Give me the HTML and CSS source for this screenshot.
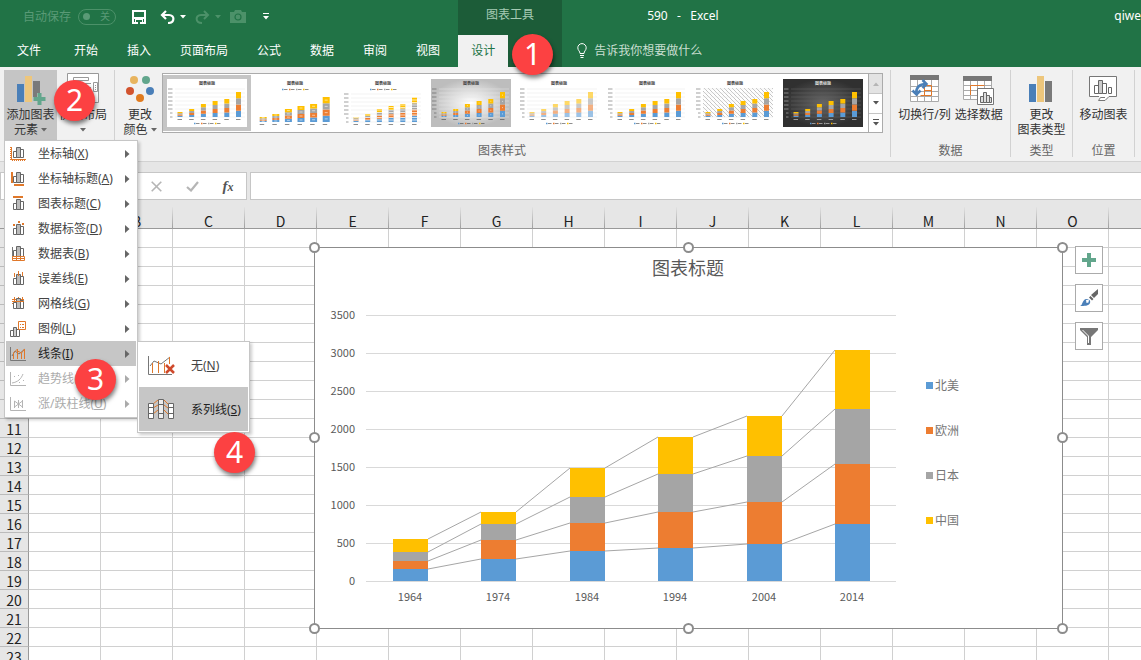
FILE: index.html
```html
<!DOCTYPE html>
<html lang="zh-CN">
<head>
<meta charset="utf-8">
<title>590 - Excel</title>
<link rel="stylesheet" href="styles.css">
</head>
<body>
<svg class="defs" aria-hidden="true">
  <symbol id="bars" viewBox="0 0 16 16"><g fill="#fff" stroke="#666"><path d="M3.500 6.500h3v6h-3zM10.500 4.500h3v8h-3z"/><path fill="#bbb" d="M6.500 2.500h4v10h-4z"/></g></symbol>
  <symbol id="caret" viewBox="0 0 6 4"><path fill="currentColor" d="M0 0h6L3 3.500z"/></symbol>
</svg>

<header class="top">
  <div class="top-main">
    <div class="title-row quick">
      <label class="autosave"><span>自动保存</span><span class="switch"><input type="checkbox" disabled>关</span></label>
      <button class="q q-save" aria-label="保存"><svg width="14" height="14" viewBox="0 0 14 14"><path fill="none" stroke="#fff" stroke-width="2" d="M1 1h12v12H1z"/><path fill="#fff" d="M1 7h12v2H1zM3 9h8v5H3z"/><path fill="#217346" d="M4 10h6v2H4zM6 12h2v2H6z"/></svg></button>
      <button class="q q-undo" aria-label="撤消"><svg width="15" height="14" viewBox="0 0 15 14"><path fill="none" stroke="#fff" stroke-width="2.200" d="M6 1L2 5l4 4M2 5h7c6 0 6 8-1 8"/></svg><svg width="6" height="4"><use href="#caret"/></svg></button>
      <button class="q q-redo" aria-label="恢复" disabled><svg width="15" height="14" viewBox="0 0 15 14"><path fill="none" stroke="currentColor" stroke-width="2" d="M9 1l4 4-4 4M13 5H6c-6 0-6 8 1 8"/></svg><svg width="6" height="4"><use href="#caret"/></svg></button>
      <button class="q q-cam" aria-label="照相机" disabled><svg width="16" height="13" viewBox="0 0 16 13"><path fill="currentColor" d="M0 2h4l1-2h6l1 2h4v11H0z"/><circle cx="8" cy="7" r="3" fill="none" stroke="#217346" stroke-width="1.200"/></svg></button>
      <button class="q q-more" aria-label="自定义快速访问工具栏"><svg width="6" height="7" viewBox="0 0 6 7"><path fill="#fff" d="M0 0h6v1H0zM0 3h6L3 6.500z"/></svg></button>
    </div>
    <nav class="tabs">
      <button class="tab tab-file">文件</button><button class="tab">开始</button><button class="tab">插入</button><button class="tab">页面布局</button><button class="tab">公式</button><button class="tab">数据</button><button class="tab">审阅</button><button class="tab">视图</button>
    </nav>
  </div>
  <div class="top-context">
    <div class="title-row context-name">图表工具</div>
    <nav class="tabs"><button class="tab tab-active">设计</button></nav>
    <span class="step step-1">1</span>
  </div>
  <div class="top-rest">
    <div class="title-row"><span class="doc">590&nbsp;&nbsp; -&nbsp;&nbsp; Excel</span><span class="user">qiwe</span></div>
    <button class="tell"><svg width="10" height="15" viewBox="0 0 10 15"><path fill="none" stroke="#fff" d="M3 10.500C3 8 .8 7.500.8 4.800a4.200 4.200 0 018.400 0C9.200 7.500 7 8 7 10.500zM3 12.500h4M3.500 14.500h3"/></svg>告诉我你想要做什么</button>
  </div>
</header>

<section class="ribbon">
  <div class="group group-layout">
    <div class="tools">
      <div class="drop">
        <button class="big big-open">
          <svg width="30" height="30" viewBox="0 0 30 30"><path fill="#4a7fb8" d="M1 9h7v18H1z"/><path fill="#edc67c" d="M9 1h7v26H9z"/><path fill="#7a7a7a" d="M17 6h7v12h-3v4h-4z"/><path fill="#62a68c" d="M21.500 18h4v4h4v4h-4v4h-4v-4h-4v-4h4z"/></svg>
          <span>添加图表<br>元素 <svg class="arrow"><use href="#caret"/></svg></span>
        </button>
        <ul class="menu" id="menu"></ul>
      </div>
      <button class="big big-quick">
        <svg width="32" height="30" viewBox="0 0 32 30"><g fill="#fff" stroke="#999"><path d="M.5.500h31v29H.5z"/><path d="M6.500 4.500h15v3h-15zM26.500 9.500h4v9h-4z"/></g><path stroke="#999" fill="none" d="M4 10.500h20M4 14.500h20M4 18.500h20M28 12.500h1M28 14.500h1M28 16.500h1"/></svg>
        <span>快速布局<br><svg class="arrow"><use href="#caret"/></svg></span>
      </button>
      <span class="step step-2">2</span>
    </div>
  </div>
  <div class="group group-style">
    <div class="tools">
      <button class="big big-color">
        <svg width="30" height="30" viewBox="0 0 30 30"><circle cx="9" cy="5" r="4" fill="#e8b45e"/><circle cx="21" cy="5" r="4" fill="#62a68c"/><circle cx="5" cy="16" r="4" fill="#d2532e"/><circle cx="25" cy="16" r="4" fill="#4a7fb8"/><circle cx="15" cy="23" r="4" fill="#e07b1f"/></svg>
        <span>更改<br>颜色 <svg class="arrow"><use href="#caret"/></svg></span>
      </button>
      <div class="gallery">
        <div class="thumbs" id="thumbs"></div>
        <div class="gallery-nav">
          <button disabled aria-label="上一行"><svg width="6" height="4" viewBox="0 0 6 4"><path fill="#b5b5b5" d="M0 4h6L3 .5z"/></svg></button>
          <button aria-label="下一行"><svg width="6" height="4"><use href="#caret"/></svg></button>
          <button aria-label="更多"><svg width="6" height="7" viewBox="0 0 6 7"><path fill="currentColor" d="M0 0h6v1H0zM0 3h6L3 6.500z"/></svg></button>
        </div>
      </div>
    </div>
    <div class="group-name">图表样式</div>
  </div>
  <div class="group group-data">
    <div class="tools">
      <button class="big">
        <svg width="30" height="30" viewBox="0 0 30 30"><path fill="#fff" stroke="#aaa" d="M1.500.500h28v26h-28zM1.500 11.500h28M1.500 16.500h28M1.500 21.500h28M8.500 4v22M15.500 4v22M22.500 4v22"/><path fill="#777" d="M1 0h29v5H1z"/><path fill="none" stroke="#e0782a" d="M15.500 10.500h7v10h-11M15.500 15.500h7M15.500 10.500v10"/><path fill="none" stroke="#4a7fb8" stroke-width="2.500" d="M7 19c0-7 4-10 10-10M13.500 5l4 4-4 4M3.500 15.500l4 4 4-4"/></svg>
        <span>切换行/列</span>
      </button>
      <button class="big">
        <svg width="32" height="30" viewBox="0 0 32 30"><path fill="#fff" stroke="#aaa" d="M.5 1.500h28v23H.5zM.5 10.500h28M.5 15.500h28M.5 20.500h28M7.500 5v20M14.500 5v20M21.500 5v20"/><path fill="#777" d="M0 1h29v5H0z"/><path fill="none" stroke="#e0782a" d="M7.500 20v-9.500h14"/><path fill="#fff" stroke="#777" d="M14.500 13.500h16v16h-16z"/><path fill="#ddd" stroke="#666" d="M17.500 21.500h3v6h-3zM20.500 17.500h3v10h-3zM23.500 20.500h3v7h-3zM26.500 22.500h2v5h-2z"/></svg>
        <span>选择数据</span>
      </button>
    </div>
    <div class="group-name">数据</div>
  </div>
  <div class="group group-type">
    <div class="tools">
      <button class="big">
        <svg width="24" height="30" viewBox="0 0 24 30"><path fill="#4a7fb8" d="M0 9h7v18H0z"/><path fill="#edc67c" d="M8 1h7v26H8z"/><path fill="#7a7a7a" d="M16 6h7v21h-7z"/></svg>
        <span>更改<br>图表类型</span>
      </button>
    </div>
    <div class="group-name">类型</div>
  </div>
  <div class="group group-place">
    <div class="tools">
      <button class="big">
        <svg width="28" height="30" viewBox="0 0 28 30"><path fill="#fff" stroke="#777" d="M10 21.500H.5v-20h27v20H20l-4 4H9.500l2-3H16"/><path fill="#fff" stroke="#666" d="M5.500 10.500h4v8h-4zM13.500 8.500h4v10h-4zM19.500 12.500h3v6h-3z"/><path fill="#ccc" stroke="#666" d="M9.500 5.500h4v13h-4z"/></svg>
        <span>移动图表</span>
      </button>
    </div>
    <div class="group-name">位置</div>
  </div>
</section>

<section class="formula">
  <input class="name-box" type="text" aria-label="名称框">
  <div class="fx-box">
    <button aria-label="取消"><svg width="11" height="11" viewBox="0 0 11 11"><path fill="none" stroke="#b5b5b5" stroke-width="1.600" d="M.7.700l9.600 9.600M10.300.700L.7 10.300"/></svg></button>
    <button aria-label="输入"><svg width="13" height="11" viewBox="0 0 13 11"><path fill="none" stroke="#b5b5b5" stroke-width="2.200" d="M1 6l4 3.500L12 1"/></svg></button>
    <button class="fx" aria-label="插入函数">f<small>x</small></button>
  </div>
  <input class="formula-input" type="text" aria-label="编辑栏">
</section>

<main class="sheet">
  <table class="grid" id="grid"></table>
  <div class="chart">
    <svg id="chart" width="748" height="382" viewBox="0 0 748 382" role="img" aria-label="图表标题"></svg>
    <div class="chart-side">
      <button aria-label="图表元素"><svg width="14" height="14" viewBox="0 0 14 14"><path fill="#62a68c" d="M5 0h4v5h5v4H9v5H5V9H0V5h5z"/></svg></button>
      <button aria-label="图表样式"><svg width="18" height="18" viewBox="0 0 18 18"><path fill="#666" d="M18 0v5l-4 4-3-3zM10.500 7l3 3-1.500 1.500-3-3z"/><path fill="#4a7fb8" d="M0 17c3-1 2-6 6-7 3-.5 5 2 4 4-1 3-6 3-10 3z"/><path fill="#fff" d="M6 11l3-.5-.5 3-2 .5z"/></svg></button>
      <button aria-label="图表筛选器"><svg width="18" height="17" viewBox="0 0 18 17"><path fill="#777" d="M0 0h18v2l-7 7v8H7V9L0 2z"/><path fill="none" stroke="#fff" d="M2.500 2l6 6v7"/></svg></button>
    </div>
  </div>
</main>
<script src="app.js"></script>
</body>
</html>
```
FILE: styles.css
```css
* { box-sizing: border-box; }
body {
  margin: 0;
  height: 100vh;
  display: flex;
  flex-direction: column;
  overflow: hidden;
  background: #fff;
  color: #444;
  font: 12px/15px "Noto Sans", "Noto Sans CJK SC", sans-serif;
}
button, input { font: inherit; color: inherit; margin: 0; }
button { border: 0; padding: 0; background: none; }
svg { display: block; flex: none; }
.defs { position: absolute; width: 0; height: 0; }

/* title bar and tabs */
.top { display: flex; flex: none; background: #217346; color: #fff; white-space: nowrap; }
.top-main { padding-right: 5px; }
.title-row { display: flex; align-items: center; height: 35px; padding-bottom: 2px; }
.quick { padding-left: 23px; }
.q { display: flex; align-items: center; gap: 5px; }
.q:disabled { color: #4c9169; }
.autosave { display: flex; align-items: center; gap: 7px; color: #5a9a76; }
.switch { display: flex; align-items: center; justify-content: space-between; width: 38px; height: 16px; padding: 0 5px 0 4px; border: 1px solid #4c9169; border-radius: 8px; font-size: 10px; }
.switch input { appearance: none; width: 7px; height: 7px; border-radius: 50%; background: #5a9a76; }
.q-save { margin-left: 16px; }
.q-undo { margin-left: 14px; }
.q-redo, .q-cam { margin-left: 9px; }
.q-more { margin-left: 17px; }
.tabs { display: flex; gap: 3px; height: 32px; }
.tab { padding: 0 13px 2px; }
.tab-file { margin: 0 4px; }
.tab-active { background: #f1f1f1; color: #217346; }
.top-context { position: relative; width: 104px; background: #1c5c38; }
.context-name { justify-content: center; padding-bottom: 6px; color: #a6cbb4; }
.top-rest { flex: 1; min-width: 0; }
.top-rest .title-row { padding: 0 0 4px 85px; }
.user { margin-left: auto; }
.tell { display: flex; align-items: center; gap: 7px; height: 30px; padding-left: 15px; color: #c9dfd1; }

/* numbered markers */
.step {
  position: absolute;
  z-index: 5;
  width: 41px;
  height: 41px;
  border-radius: 50%;
  background: #fc4142;
  color: #fff;
  font-size: 30px;
  line-height: 40px;
  text-align: center;
  box-shadow: 1px 3px 4px rgba(0, 0, 0, .5);
}
.step-1 { left: 54px; top: 34px; }
.step-2 { left: 50px; top: 10px; }
.step-3 { left: 69px; top: 18px; }
.step-4 { left: 208px; top: 91px; }

/* ribbon */
.ribbon { display: flex; flex: none; height: 95px; padding: 3px 0 4px; background: #f1f1f1; border-bottom: 1px solid #d2d2d2; }
.group { display: flex; flex-direction: column; flex: none; border-right: 1px solid #d2d2d2; }
.group-layout { width: 115px; padding-left: 4px; }
.group-style { width: 776px; padding-left: 3px; }
.group-data { width: 120px; }
.group-type { width: 62px; }
.group-place { width: 62px; }
.tools { position: relative; display: flex; flex: 1; justify-content: center; }
.group-layout .tools, .group-style .tools { justify-content: flex-start; }
.group-name { text-align: center; color: #666; line-height: 12px; }
.group-style .group-name { padding-right: 4px; }
.drop { position: relative; z-index: 3; }
.big { display: flex; flex-direction: column; align-items: center; gap: 2px; height: 70px; padding: 5px 2px 0; white-space: nowrap; color: #333; }
.big-open { width: 53px; background: #c5c5c5; }
.big-quick { width: 52px; padding-top: 3px; gap: 4px; }
.big-color { width: 44px; }
.arrow { display: inline-block; width: 6px; height: 4px; vertical-align: 2px; color: #666; }

.gallery { display: flex; height: 60px; margin-top: 3px; border: 1px solid #ababab; background: #fff; }
.thumbs { display: flex; padding: 1px; padding-left: 0; }
.thumb { width: 88px; height: 56px; border: 4px solid transparent; background: #fff; }
.thumb.selected { border-color: #c5c5c5; }
.thumb .t-title { font-size: 4px; font-weight: bold; }
.gallery-nav { display: grid; grid-template-rows: repeat(3, 1fr); width: 14px; border-left: 1px solid #ababab; color: #555; }
.gallery-nav button { display: grid; place-items: center; }
.gallery-nav button + button { border-top: 1px solid #c5c5c5; }
.gallery-nav button:disabled { background: #e3e3e3; }

/* drop-down menus */
.menu, .submenu { position: absolute; margin: 0; list-style: none; background: #fff; border: 1px solid #c6c6c6; box-shadow: 2px 2px 3px rgba(0, 0, 0, .2); color: #444; }
.menu { left: 0; top: 70px; width: 134px; padding: 0 1px 1px; }
.menu li { position: relative; }
.menu button { display: flex; align-items: center; width: 100%; text-align: left; white-space: nowrap; }
.item { height: 25px; padding: 0 6px 0 4px; gap: 12px; }
.item:disabled { color: #ababab; }
.item:disabled svg { filter: grayscale(1); opacity: .55; }
.item .more { margin-left: auto; color: #666; }
.on { background: #c6c6c6; color: #222; }
.submenu { left: 131px; top: 0; width: 113px; padding: 1px; }
.sub { height: 44px; padding-left: 8px; gap: 16px; }

/* formula bar */
.formula { display: flex; flex: none; height: 45px; padding: 10px 0 7px; background: #e6e6e6; }
.formula > * { height: 28px; border: 1px solid #c6c6c6; background: #fff; }
.name-box { width: 120px; margin-right: 17px; }
.fx-box { display: flex; margin-right: 3px; }
.fx-box button { display: grid; place-items: center; width: 36px; }
.fx-box .fx { display: block; font: italic bold 15px/24px "Liberation Serif", serif; color: #555; }
.fx small { font-size: 12px; }
.formula-input { flex: 1; min-width: 0; border-right: 0; }

/* worksheet */
.sheet { position: relative; flex: 1; min-height: 0; overflow: hidden; }
.grid { border-collapse: separate; border-spacing: 0; table-layout: fixed; width: 1181px; font: 14px/16px "Noto Sans CJK SC", sans-serif; color: #222; }
.grid th { padding: 2px 0 0; font-weight: normal; background: #e6e6e6; }
.grid thead th { width: 72px; height: 22px; padding-top: 5px; border-right: 1px solid; border-image: linear-gradient(#e6e6e6, #999) 1; border-image-width: 0 1px 0 0; box-shadow: inset 0 -1px #999; }
.grid thead th:first-child { width: 29px; }
.grid tbody th, .grid td { height: 19px; border-right: 1px solid #d0d0d0; border-bottom: 1px solid #d0d0d0; }
.grid td { padding: 0; }
.grid tbody th { border-right-color: #999; border-bottom-color: #bbb; }

.chart { position: absolute; left: 314px; top: 40px; display: flex; gap: 13px; }
.chart > svg { overflow: visible; }
.chart text { fill: #595959; font: 11px "Noto Sans CJK SC", sans-serif; }
.chart .c-title { font-size: 18px; }
.chart .c-legend { font-size: 12px; fill: #767676; }
.chart-side { display: flex; flex-direction: column; gap: 10px; margin-top: -1px; }
.chart-side button { display: grid; place-items: center; width: 28px; height: 28px; border: 1px solid #ababab; background: #fff; }
```
FILE: app.js
```js
const COLORS = ['#5b9bd5', '#ed7d31', '#a5a5a5', '#ffc000'];

/* worksheet cells */
const cols = 'ABCDEFGHIJKLMNO'.split('').concat('');
let grid = '<thead><tr><th></th>' + cols.map(c => `<th>${c}</th>`).join('') + '</tr></thead><tbody>';
for (let r = 1; r <= 23; r++) grid += `<tr><th>${r}</th>${'<td></td>'.repeat(cols.length)}</tr>`;
document.getElementById('grid').innerHTML = grid + '</tbody>';

/* chart: tops of each stacked segment, measured from the chart frame */
const bars = [
  ['1964', 79, [322, 314, 305, 292]],
  ['1974', 167, [312, 293, 277, 265]],
  ['1984', 256, [304, 276, 250, 221]],
  ['1994', 344, [301, 265, 227, 190]],
  ['2004', 433, [297, 255, 209, 169]],
  ['2014', 521, [277, 217, 162, 103]]
];
const BASE = 334, W = 35;
let c = '<rect x=".5" y=".5" width="748" height="381" fill="#fff" stroke="#8c8c8c"/>';
c += '<text class="c-title" x="374" y="28" text-anchor="middle">图表标题</text>';
for (let i = 0; i < 8; i++) {
  const y = BASE - i * 38;
  c += `<path stroke="#d9d9d9" d="M52 ${y + .5}H582"/><text x="41" y="${y + 4}" text-anchor="end">${i * 500}</text>`;
}
bars.forEach(([year, x, tops], n) => {
  let bottom = BASE;
  tops.forEach((top, s) => {
    c += `<rect x="${x}" y="${top}" width="${W}" height="${bottom - top}" fill="${COLORS[s]}"/>`;
    bottom = top;
    const next = bars[n + 1];
    if (next) c += `<path stroke="#a6a6a6" d="M${x + W} ${top}L${next[1]} ${next[2][s]}"/>`;
  });
  c += `<text x="${x + 17}" y="354" text-anchor="middle">${year}</text>`;
});
['北美', '欧洲', '日本', '中国'].forEach((name, i) => {
  const y = 135 + i * 45;
  c += `<rect x="612" y="${y}" width="7" height="7" fill="${COLORS[i]}"/><text class="c-legend" x="621" y="${y + 8}">${name}</text>`;
});
[[0, 0], [374, 0], [748, 0], [0, 190], [748, 190], [0, 381], [374, 381], [748, 381]].forEach(([x, y]) => {
  c += `<circle cx="${x + .5}" cy="${y + .5}" r="4.500" fill="#fff" stroke="#8c8c8c" stroke-width="2"/>`;
});
document.getElementById('chart').innerHTML = c;

/* style gallery */
const styles = [
  {}, { wide: 1, top: 1 }, { top: 1, axis: 1, stripes: 1 }, { bg: 'url(#silver)', values: 1 },
  { fade: 1 }, {}, { hatch: 1 }, { bg: 'url(#dark)', dark: 1 }
];
const H = [5, 8, 13, 16, 18, 25];
function thumb(o, i) {
  const ink = o.dark ? '#ddd' : '#444';
  const base = o.top ? 43 : 38;
  const w = o.wide ? 7 : 5;
  const step = o.wide ? 12.6 : 11.7;
  let s = '';
  if (!i) s += '<defs><radialGradient id="silver"><stop stop-color="#fff"/><stop offset="1" stop-color="#bdbdbd"/></radialGradient><radialGradient id="dark"><stop stop-color="#666"/><stop offset="1" stop-color="#303030"/></radialGradient><pattern id="hatch" width="4" height="4" patternUnits="userSpaceOnUse"><path d="M0 0l4 4" stroke="#aaa" stroke-width=".7"/></pattern></defs>';
  s += `<rect width="80" height="48" fill="${o.bg || '#fff'}"/>`;
  if (o.hatch) s += '<rect x="8" y="9" width="70" height="29" fill="url(#hatch)"/>';
  s += `<text class="t-title" x="40" y="6" text-anchor="middle" fill="${ink}">图表标题</text>`;
  for (let g = 0; g < 8; g++) {
    const y = base - g * 4;
    if (!o.wide) s += `<path stroke="${o.dark ? '#666' : '#e4e4e4'}" stroke-width=".5" d="M8 ${y}H78"/><path stroke="${ink}" opacity=".5" d="M${g < 2 ? 3 : 1} ${y}H5.500"/>`;
  }
  H.forEach((h, n) => {
    const x = (o.wide ? 4.700 : 10.500) + n * step;
    COLORS.forEach((col, k) => {
      const y = base - h * (k + 1) / 4;
      s += `<rect x="${x}" y="${y}" width="${w}" height="${h / 4}" fill="${col}" opacity="${o.fade ? .6 : 1}"/>`;
      if (o.wide || o.values) s += `<path stroke="#fff" stroke-width=".8" opacity=".7" d="M${x + 2} ${y + h / 8}h${w - 4}"/>`;
    });
    if (o.stripes) for (let y = base - 2; y > base - h; y -= 2.5) s += `<path stroke="#fff" stroke-width=".7" d="M${x} ${y}h5"/>`;
    s += `<path stroke="${ink}" opacity=".6" d="M${x} ${base + 2.5}h4.500"/>`;
  });
  const ly = o.top ? 10.5 : 44.5;
  COLORS.forEach((col, k) => {
    s += `<path stroke="${col}" stroke-width="1.500" d="M${27 + k * 7} ${ly}h1.500"/><path stroke="${ink}" opacity=".6" d="M${29 + k * 7} ${ly}h3.500"/>`;
  });
  return `<button class="thumb${i ? '' : ' selected'}" aria-label="样式 ${i + 1}"><svg width="80" height="48" viewBox="0 0 80 48">${s}</svg></button>`;
}
document.getElementById('thumbs').innerHTML = styles.map(thumb).join('');

/* chart element menu */
const bar = y => `<use href="#bars" y="${y}" width="16" height="16"/>`;
const O = d => `<path fill="none" stroke="#e0782a" d="${d}"/>`;
const F = d => `<path fill="#e0782a" d="${d}"/>`;
const G = d => `<path fill="none" stroke="#777" d="${d}"/>`;
const items = [
  ['坐标轴', 'X', bar(-1) + '<path fill="none" stroke="#e0782a" stroke-width="2" stroke-dasharray="1 1" d="M1 1v13h15"/>' + O('M1.500 1v12.500H16')],
  ['坐标轴标题', 'A', bar(-1) + F('M1 1h2v11H1zM4 13h10v2H4z')],
  ['图表标题', 'C', bar(1) + F('M3 0h10v2H3z')],
  ['数据标签', 'D', bar(1) + F('M3 3h2v2H3zM8 0h2v2H8zM12 2h2v2h-2z')],
  ['数据表', 'B', bar(-2) + G('M2.500 1v10') + '<path fill="#fff" stroke="#e0782a" d="M2.500 10.500h12v4h-12zM2 12.500h12M6.500 10v4M10.500 10v4"/>'],
  ['误差线', 'E', bar(1) + O('M4.500 2v4M8.500 0v5M12.500 1v4')],
  ['网格线', 'G', O('M2 3.500h12M2 7.500h12M4.500 1v12M8.500 1v12M12.500 1v12') + bar(0) + O('M2 5.500h12')],
  ['图例', 'L', '<path fill="#fff" stroke="#666" d="M.5 9.500h3v6h-3zM6.500 8.500h3v7h-3z"/><path fill="#ccc" stroke="#666" d="M3.500 6.500h3v9h-3z"/>' + O('M8.500.500h7v8h-7zM10 3.500h1M12 3.500h2M10 6.500h1M12 6.500h2')],
  ['线条', 'I', G('M.5 1v13.500H16M2 10l3-5 4 3 6-5') + O('M3.500 13V7l4-4v10M7.500 5l4 2v6M11.500 7l3-4v10')],
  ['趋势线', 'R', G('M.5 1v13.500H16M2 12c6-1 9-4 11-9M4 5.500h1M8 4.500h1M9 11.500h1M13 9.500h1')],
  ['涨/跌柱线', 'U', G('M.5 1v13.500H16M4.500 5v7M4.500 5l8 6M4.500 11l8-6M12.500 4v8M8.500 4v8')]
];
const more = '<svg class="more" width="5" height="8" viewBox="0 0 5 8"><path fill="currentColor" d="M0 0l4.500 4L0 8z"/></svg>';
const sub = `<ul class="submenu">
  <li><button class="sub"><svg width="28" height="22" viewBox="0 0 28 22">${G('M1.500 2v18.500H25M3 12l4-5 7 3 9-7')}${O('M5.500 19V9M11.500 19V7M17.500 19V9M22.500 10V3')}<path stroke="#cf4a2c" stroke-width="2.500" d="M19 11l8 8M27 11l-8 8"/></svg><span>无(<u>N</u>)</span></button></li>
  <li><button class="sub on"><svg width="28" height="22" viewBox="0 0 28 22">${O('M6 6l5-4M6 10l5-3M6 16l5-4M17 2l4 4M17 7l4 3M17 12l4 4')}<path fill="#fff" stroke="#666" d="M1.500 5.500h5v15h-5zM21.500 5.500h5v15h-5zM1.500 9.500h5M1.500 15.500h5M21.500 9.500h5M21.500 15.500h5"/><path fill="#eee" stroke="#666" d="M11.500 1.500h5v19h-5zM11.500 6.500h5M11.500 15.500h5"/></svg><span>系列线(<u>S</u>)</span></button></li>
</ul><span class="step step-3">3</span><span class="step step-4">4</span>`;
document.getElementById('menu').innerHTML = items.map(([name, key, icon], i) =>
  `<li><button class="item${i === 8 ? ' on' : ''}"${i > 8 ? ' disabled' : ''}><svg width="16" height="16" viewBox="0 0 16 16">${icon}</svg><span>${name}(<u>${key}</u>)</span>${more}</button>${i === 8 ? sub : ''}</li>`
).join('');
```
